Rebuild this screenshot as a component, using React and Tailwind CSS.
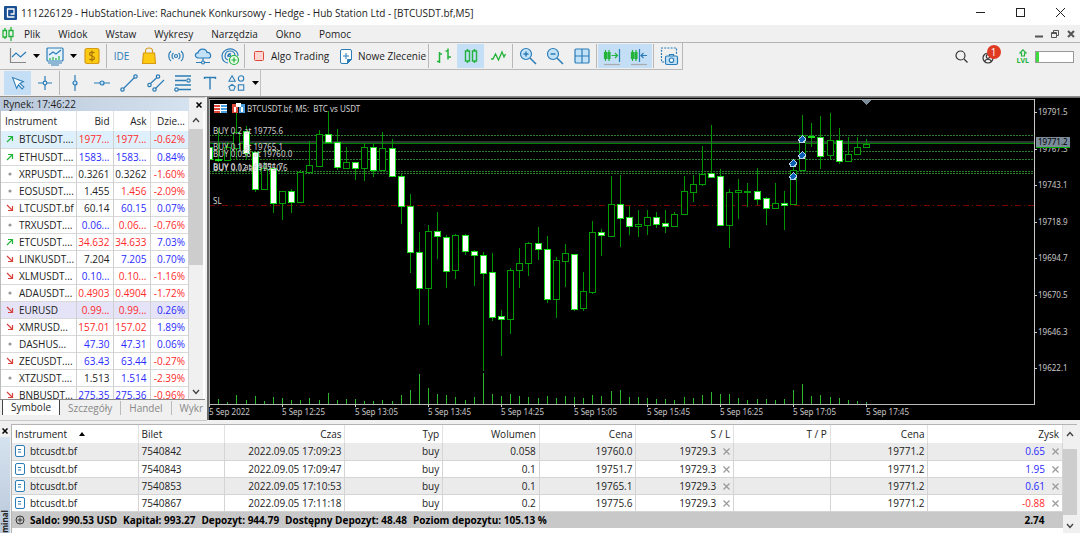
import { useState } from 'react'
import clsx from 'clsx'

const BLUE = '#2b7db8'
const GREEN = '#22b33a'

const MENU = ['Plik', 'Widok', 'Wstaw', 'Wykresy', 'Narzędzia', 'Okno', 'Pomoc']

const RED_TXT = 'text-[#ff2a2a]'
const BLUE_TXT = 'text-[#2a2aff]'
const DARK_TXT = 'text-[#222]'
const TONE = { r: RED_TXT, b: BLUE_TXT, k: DARK_TXT }

// dir, symbol, bid, ask, daily change, tones of the three numbers
const QUOTES = [
  ['up', 'BTCUSDT....', '1977...', '1977...', '-0.62%', 'rrr'],
  ['up', 'ETHUSDT....', '1583...', '1583...', '0.84%', 'bbb'],
  ['flat', 'XRPUSDT....', '0.3261', '0.3262', '-1.60%', 'kkr'],
  ['flat', 'EOSUSDT....', '1.455', '1.456', '-2.09%', 'krr'],
  ['down', 'LTCUSDT.bf', '60.14', '60.15', '0.07%', 'kbb'],
  ['flat', 'TRXUSDT....', '0.06...', '0.06...', '-0.76%', 'brr'],
  ['up', 'ETCUSDT....', '34.632', '34.633', '7.03%', 'rrb'],
  ['down', 'LINKUSDT...', '7.204', '7.205', '0.70%', 'kbb'],
  ['down', 'XLMUSDT...', '0.10...', '0.10...', '-1.16%', 'brr'],
  ['flat', 'ADAUSDT...', '0.4903', '0.4904', '-1.72%', 'rrr'],
  ['down', 'EURUSD', '0.99...', '0.99...', '0.26%', 'rrb'],
  ['down', 'XMRUSD...', '157.01', '157.02', '1.89%', 'rrb'],
  ['flat', 'DASHUS...', '47.30', '47.31', '0.06%', 'bbb'],
  ['down', 'ZECUSDT....', '63.43', '63.44', '-0.27%', 'bbr'],
  ['flat', 'XTZUSDT....', '1.513', '1.514', '-2.39%', 'kbr'],
  ['down', 'BNBUSDT...', '275.35', '275.36', '-0.96%', 'bbr'],
]

const POSITIONS = [
  ['7540842', '2022.09.05 17:09:23', '0.058', '19760.0', '0.65'],
  ['7540843', '2022.09.05 17:09:47', '0.1', '19751.7', '1.95'],
  ['7540853', '2022.09.05 17:10:53', '0.1', '19765.1', '0.61'],
  ['7540867', '2022.09.05 17:11:18', '0.2', '19775.6', '-0.88'],
]

// body top, body bottom, high, low, falling, volume
const CANDLES = [
  [147, 159, 147, 159, 1, 0], [159, 160, 128, 162, 1, 5], [147, 160, 142, 160, 0, 2],
  [132, 148, 113, 159, 0, 9], [131, 153, 126, 159, 1, 4], [152, 189, 152, 192, 1, 8],
  [168, 189, 162, 189, 0, 3], [168, 203, 168, 213, 1, 7], [191, 203, 191, 220, 0, 6],
  [191, 202, 189, 213, 1, 4], [172, 202, 170, 203, 0, 4], [165, 172, 141, 172, 0, 6],
  [134, 166, 130, 167, 0, 4], [134, 142, 111, 144, 1, 11], [142, 167, 129, 170, 1, 4],
  [162, 168, 147, 168, 0, 5], [162, 168, 162, 180, 1, 5], [147, 168, 143, 181, 0, 3],
  [147, 170, 144, 177, 1, 3], [148, 170, 132, 171, 0, 4], [148, 176, 139, 177, 1, 3],
  [176, 206, 174, 224, 1, 9], [206, 252, 194, 273, 1, 14], [252, 288, 232, 325, 1, 30],
  [231, 288, 225, 325, 0, 16], [231, 236, 212, 259, 1, 10], [237, 271, 235, 288, 1, 9],
  [235, 270, 234, 279, 0, 7], [235, 251, 234, 255, 1, 4], [251, 255, 250, 286, 1, 7],
  [255, 273, 252, 371, 1, 31], [272, 317, 253, 321, 1, 10], [316, 319, 310, 356, 1, 8],
  [270, 319, 268, 334, 0, 10], [263, 270, 248, 288, 0, 8], [243, 263, 242, 276, 0, 7],
  [243, 249, 227, 260, 1, 6], [249, 299, 236, 303, 1, 8], [260, 299, 257, 318, 0, 6],
  [253, 261, 244, 287, 0, 8], [254, 309, 254, 311, 1, 7], [291, 308, 272, 311, 0, 6],
  [232, 292, 221, 294, 0, 9], [232, 235, 229, 256, 1, 8], [204, 236, 176, 236, 0, 13],
  [204, 218, 175, 247, 1, 14], [217, 226, 206, 235, 1, 7], [224, 226, 210, 237, 0, 7],
  [217, 225, 210, 235, 0, 6], [217, 224, 212, 228, 1, 5], [223, 226, 210, 233, 1, 5],
  [214, 226, 212, 227, 0, 4], [191, 214, 176, 215, 0, 7], [184, 192, 175, 202, 0, 6],
  [174, 184, 146, 186, 0, 9], [173, 177, 125, 177, 1, 12], [176, 225, 169, 225, 1, 10],
  [192, 225, 189, 248, 0, 10], [190, 192, 179, 219, 0, 6], [191, 192, 183, 207, 0, 4],
  [191, 199, 168, 205, 1, 5], [198, 208, 197, 225, 1, 5], [203, 208, 183, 209, 0, 4],
  [203, 205, 191, 230, 1, 5], [170, 204, 159, 205, 0, 14], [135, 170, 115, 171, 0, 20],
  [136, 137, 123, 147, 1, 8], [137, 156, 116, 169, 1, 9], [140, 155, 113, 159, 0, 7],
  [140, 161, 128, 164, 1, 6], [154, 161, 137, 162, 0, 4], [147, 154, 137, 155, 0, 3],
  [144, 147, 139, 147, 0, 2],
]

const TIMES = ['5 Sep 2022', '5 Sep 12:25', '5 Sep 13:05', '5 Sep 13:45', '5 Sep 14:25', '5 Sep 15:05', '5 Sep 15:45', '5 Sep 16:25', '5 Sep 17:05', '5 Sep 17:45']
const PRICES = ['19791.5', '19767.3', '19743.1', '19718.9', '19694.7', '19670.5', '19646.3', '19622.1']

const TOP = 98
const STEP = 9.125
const AXIS = 306

const ENTRIES = [
  [134, 'BUY 0.2 at 19775.6'],
  [150, 'BUY 0.1 at 19765.1'],
  [157, 'BUY 0.058 at 19760.0'],
  [170, 'BUY 0.1 at 19751.7'],
  [171, 'BUY 0.02 at 19750.6'],
]

function Icon({ size = 20, children, stroke = BLUE }) {
  return (
    <svg width={size} height={size} viewBox="0 0 20 20" fill="none" stroke={stroke} strokeWidth="1.2" aria-hidden="true" className="shrink-0">
      {children}
    </svg>
  )
}

function Tool({ label, active, children }) {
  return (
    <button aria-label={label} className={clsx('flex h-6 w-[27px] shrink-0 items-center justify-center', active && 'bg-[#c3def5]')}>
      {children}
    </button>
  )
}

function Caret({ label }) {
  return (
    <button aria-label={label} className="flex h-6 w-[10px] shrink-0 items-center justify-center">
      <svg width="7" height="4" viewBox="0 0 7 4"><path d="M0 0h7L3.500 4z" fill="#000" /></svg>
    </button>
  )
}

const Sep = () => <div className="mx-px h-6 w-px shrink-0 bg-[#b8b8b8]" />

function TitleBar() {
  return (
    <header className="flex h-[25px] items-center bg-white pl-1">
      <svg width="13" height="14" viewBox="0 0 13 14" className="shrink-0">
        <rect width="13" height="14" rx="1" fill="#1b4f93" />
        <path d="M3.500 11.500V3h6.500v5H6.500M3.500 11h7" fill="none" stroke="#fff" strokeWidth="1.300" />
      </svg>
      <h1 className="ml-1 flex-1 truncate text-[10px] leading-4">111226129 - HubStation-Live: Rachunek Konkursowy - Hedge - Hub Station Ltd - [BTCUSDT.bf,M5]</h1>
      <button aria-label="Minimize" className="flex w-10 justify-center">
        <svg width="9" height="9" stroke="#222"><path d="M0 4.500h9" /></svg>
      </button>
      <button aria-label="Maximize" className="flex w-10 justify-center">
        <svg width="9" height="9" stroke="#222" fill="none"><rect x=".5" y=".5" width="8" height="8" /></svg>
      </button>
      <button aria-label="Close" className="flex w-10 justify-center">
        <svg width="9" height="9" stroke="#222"><path d="M0 0l9 9M9 0L0 9" /></svg>
      </button>
    </header>
  )
}

function MenuBar() {
  return (
    <nav className="flex h-[18px] items-center border-b border-[#b4b4b4] pr-[5px]">
      <svg width="12" height="14" viewBox="0 0 12 14" fill="none" stroke={GREEN} strokeWidth="1.300" className="ml-[2px] shrink-0">
        <path d="M3 1v2M3 10v2M9 0v3M9 10v4M1 3.500h3.500v6.500H1zM7 3.500h4v6H7z" />
      </svg>
      <div className="ml-[10px] flex flex-1 gap-[18px] text-[10px] leading-4">
        {MENU.map((m) => <button key={m}>{m}</button>)}
      </div>
      <div className="flex gap-2 text-[#555]">
        <button aria-label="Minimize chart"><svg width="8" height="8" stroke="currentColor" strokeWidth="2"><path d="M0 6.500h8" /></svg></button>
        <button aria-label="Restore chart"><svg width="8" height="8" stroke="currentColor" fill="none"><path d="M.5 2.500h5v5h-5zM2.500 2V.5h5v5H6M1 3.500h4" /></svg></button>
        <button aria-label="Close chart"><svg width="8" height="8" stroke="currentColor" strokeWidth="2"><path d="M1 1l6 6M7 1L1 7" /></svg></button>
      </div>
    </nav>
  )
}

function StandardBar() {
  return (
    <div className="flex h-[27px] items-center">
      <div className="flex h-[27px] items-center border-r border-b border-[#b8b8b8] pl-1">
        <Tool label="Chart type">
          <Icon><path d="M2.500 2v14.500H18" stroke="#888" /><path d="M4 11l4-4 4.500 4L18 6" /></Icon>
        </Tool>
        <Caret label="Chart type menu" />
        <Tool label="Template">
          <Icon>
            <rect x="2" y="2" width="16" height="13" rx="1" fill="#e5f2fb" />
            <path d="M4 9l4-3 3 2 5-4" /><path d="M5 14v-2M8 14v-3M11 14v-2M14 14v-4" stroke={GREEN} />
            <path d="M3 17h14M6 19h8" />
          </Icon>
        </Tool>
        <Caret label="Template menu" />
        <Tool label="Trading account">
          <Icon>
            <rect x="3" y="2.500" width="14" height="15" rx="2" fill="#fcc913" stroke="#d79a12" />
            <path d="M12.500 7c-1-1.300-5-1.300-5 1s5 1.600 5 4-4 2.200-5 .8M10 4.500v11" stroke="#a87408" />
          </Icon>
        </Tool>
        <Sep />
        <Tool label="IDE"><span className="text-[10px] leading-4 text-[#2b7db8]">IDE</span></Tool>
        <Tool label="Market">
          <Icon stroke="#d79a12"><path d="M6.500 8V5c0-4 7-4 7 0v3" /><path d="M4.500 7h11l1 10.500h-13z" fill="#fcc913" /></Icon>
        </Tool>
        <Tool label="Signals">
          <Icon><circle cx="10" cy="10" r="1.500" /><path d="M7.500 7c-2 1.500-2 4.500 0 6M12.500 7c2 1.500 2 4.500 0 6M5 5c-3 2.500-3 7.500 0 10M15 5c3 2.500 3 7.500 0 10" /></Icon>
        </Tool>
        <Tool label="VPS">
          <Icon><path d="M5 12c-4-1-3-5.500 0-5C6 2 13 2 14 6.500c4-.5 5 5.500 1.500 5.500z" fill="#c3e2f8" /><path d="M10 12v3M3 16.500h5.500M11.500 16.500H17" /><circle cx="10" cy="16.500" r="1.500" /></Icon>
        </Tool>
        <Tool label="Broadcast">
          <Icon>
            <path d="M8 17C1 16 0 7 6 4s12 1 12 6M8 14c-5-2-3-9 2-9 3 0 5 2 5 5M8 11c-1-2 1-4 3-3" />
            <circle cx="9.500" cy="9.500" r="1" />
            <circle cx="14" cy="14" r="4.500" fill="#e9fbe9" stroke={GREEN} /><path d="M14 11.500v5M11.500 14h5" stroke={GREEN} />
          </Icon>
        </Tool>
        <Sep />
        <button className="flex h-6 w-[87px] shrink-0 items-center gap-[7px] pl-2 text-[10px] leading-4 whitespace-nowrap">
          <svg width="10" height="10" className="shrink-0"><rect x=".5" y=".5" width="9" height="9" rx="1" fill="#ffd6cf" stroke="#e0483a" /></svg>
          Algo Trading
        </button>
        <button className="flex h-6 w-[94px] shrink-0 items-center gap-[6px] pl-[7px] text-[10px] leading-4 whitespace-nowrap">
          <svg width="12" height="15" viewBox="0 0 12 15" fill="#fff" stroke={BLUE} className="shrink-0">
            <path d="M2 .5h8q1.500 0 1.500 1.500v8l-4 4.500H2q-1.500 0-1.500-1.500V2Q.5.5 2 .5z" /><path d="M6 4v6M3 7h6" /><path d="M7.500 14.500v-4h4z" fill={BLUE} />
          </svg>
          Nowe Zlecenie
        </button>
        <Sep />
        <Tool label="Bar chart"><Icon stroke={GREEN}><path d="M5.500 6v11M5.500 8h2.500M3 15.500h2.500M14 2.500v11M11.500 5H14M14 11h3" strokeWidth="1.500" /></Icon></Tool>
        <Tool label="Candlesticks" active><Icon stroke={GREEN}><path d="M6.500 3v2M6.500 15v2M13.500 3v2M13.500 15v2M4.500 5h4v10h-4zM11.500 5h4v10h-4z" strokeWidth="1.400" /></Icon></Tool>
        <Tool label="Line chart"><Icon stroke={GREEN}><path d="M3 13h2l2.500-5 3 6 3.500-8 2 5 1.500-3" strokeWidth="1.300" /></Icon></Tool>
        <Sep />
        <Tool label="Zoom in"><Icon><circle cx="8" cy="8" r="5.500" fill="#c3e2f8" /><path d="M12 12l6 6M8 5.500v5M5.500 8h5" strokeWidth="1.500" /></Icon></Tool>
        <Tool label="Zoom out"><Icon><circle cx="8" cy="8" r="5.500" fill="#c3e2f8" /><path d="M12 12l6 6M5.500 8h5" strokeWidth="1.500" /></Icon></Tool>
        <Tool label="Tile windows"><Icon><rect x="3" y="3" width="14" height="14" rx="1" fill="#c3e2f8" /><path d="M10 3v14M3 10h14" /></Icon></Tool>
        <Sep />
        <Tool label="Auto scroll" active>
          <Icon><path d="M3.500 4v11M7 4v11M2.500 6.500h2v6h-2zM6 6.500h2v6H6zM9.500 9.500H15M13 7l2.500 2.500L13 12" stroke={GREEN} /><path d="M17.500 3v13" /><path d="M2 18.500h16" stroke="#aaa" /></Icon>
        </Tool>
        <Tool label="Chart shift" active>
          <Icon><path d="M3.500 4v11M7 4v11M2.500 6.500h2v6h-2zM6 6.500h2v6H6z" stroke={GREEN} /><path d="M10.500 3v13M12 9.500h6M14.500 7L12 9.500l2.500 2.500" /><path d="M2 18.500h16" stroke="#aaa" /></Icon>
        </Tool>
        <Sep />
        <Tool label="Screenshot">
          <Icon><path d="M5 16H2.500V2h15v6" strokeDasharray="2 1.200" /><rect x="6.500" y="10" width="12" height="8.500" rx="1.500" fill="#c3e2f8" /><path d="M10.500 10V8.500h4V10" /><circle cx="12.500" cy="14.200" r="2.200" fill="#fff" /></Icon>
        </Tool>
      </div>
      <div className="ml-auto flex items-center pr-[6px]">
        <button aria-label="Search" className="mr-[13px]">
          <svg width="13" height="13" fill="none" stroke="#333" strokeWidth="1.200"><circle cx="5.500" cy="5.500" r="4.500" /><path d="M9 9l3.500 3.500" /></svg>
        </button>
        <button aria-label="Account" className="relative mr-4">
          <svg width="20" height="16" fill="none" stroke="#333" strokeWidth="1.200"><circle cx="7" cy="9" r="5" /><circle cx="7" cy="7.500" r="1.800" /><path d="M3.500 12.500c1-3 6-3 7 0" /></svg>
          <span className="absolute -top-1 right-0 flex size-[14px] items-center justify-center rounded-full bg-[#e03a22] text-[10px] leading-none text-white">1</span>
        </button>
        <div className="mr-[6px] flex flex-col items-center text-[#22b33a]">
          <svg width="8" height="8" fill="none" stroke="currentColor" strokeWidth="1.200"><path d="M4 .8L7.200 4H5.500v3h-3V4H.8z" /></svg>
          <span className="text-[7px] leading-[7px] font-bold">LVL</span>
        </div>
        <div role="meter" aria-label="Connection level" aria-valuenow={6} className="h-[12px] w-[39px] border border-[#999] bg-white">
          <div className="h-full w-[3px] bg-[#3fdc3f]" />
        </div>
      </div>
    </div>
  )
}

function DrawingBar() {
  return (
    <div className="flex h-[27px] items-center border-b border-[#8e8e8e]">
      <div className="flex h-[26px] items-center border-r border-[#c0c0c0] pl-1">
        <Tool label="Cursor" active><Icon size={18}><path d="M4 4l4.500 12 2-4 4 4.500 2-2-4.500-4 4-2z" fill="#fff" /></Icon></Tool>
        <Tool label="Crosshair"><Icon><path d="M10 3v5M10 12v5M3 10h5M12 10h5" /><circle cx="10" cy="10" r="1.800" /></Icon></Tool>
        <Sep />
        <Tool label="Vertical line"><Icon><path d="M10 2v6M10 12v6" /><circle cx="10" cy="10" r="2" fill="#c3e2f8" /></Icon></Tool>
        <Tool label="Horizontal line"><Icon><path d="M2 10h6M12 10h6" /><circle cx="10" cy="10" r="2" fill="#c3e2f8" /></Icon></Tool>
        <Tool label="Trend line"><Icon><path d="M5 15L15.500 4.500" /><circle cx="3.500" cy="16.500" r="1.700" /><circle cx="16.500" cy="3.500" r="1.700" /></Icon></Tool>
        <Tool label="Channel"><Icon><path d="M4.500 10.500L11 4.500M9.500 15.500L18 7" /><circle cx="3.500" cy="12" r="1.700" /><circle cx="12" cy="3.500" r="1.700" /><circle cx="8.500" cy="16.500" r="1.700" /></Icon></Tool>
        <Tool label="Fibonacci"><Icon><path d="M2 3h16M2 7.500h11M2 12h16M5 16.500h13" strokeWidth="1.400" /><circle cx="15.500" cy="7.500" r="1.700" /><circle cx="3.500" cy="16.500" r="1.700" /></Icon></Tool>
        <Tool label="Text"><Icon><path d="M4.500 6V4.500h11V6M10 4.500v12" strokeWidth="1.400" /></Icon></Tool>
        <Tool label="Shapes"><Icon size={18}><path d="M4.500 2L8 8H1z" /><circle cx="14.500" cy="5" r="3" /><path d="M4.500 11.500l3.500 2.700-1.500 3.800h-4L1 14.200z" /><rect x="11.500" y="12" width="6" height="6" /></Icon></Tool>
        <Caret label="Shapes menu" />
      </div>
    </div>
  )
}

function Direction({ dir }) {
  if (dir === 'flat') return <svg width="8" height="8"><circle cx="4" cy="4" r="1.600" fill="#999" /></svg>
  return dir === 'up'
    ? <svg width="8" height="8" fill="none" stroke={GREEN} strokeWidth="1.200"><path d="M1 7l5.500-5.500M2 1.500h4.500V6" /></svg>
    : <svg width="8" height="8" fill="none" stroke="#d9403a" strokeWidth="1.200"><path d="M1 1l5.500 5.500M2 6.500h4.500V2" /></svg>
}

function ScrollBar({ thumb }) {
  return (
    <div className="flex w-[14px] shrink-0 flex-col items-center bg-[#f0f0f0]">
      <svg width="8" height="18" fill="none" stroke="#444" strokeWidth="1.400" className="shrink-0"><path d="M1 11l3-3.500L7 11" /></svg>
      <div className={clsx('w-full bg-[#cdcdcd]', thumb)} />
      <svg width="8" height="14" fill="none" stroke="#444" strokeWidth="1.400" className="mt-auto shrink-0"><path d="M1 5l3 3.500L7 5" /></svg>
    </div>
  )
}

function MarketWatch() {
  const [tab, setTab] = useState('Symbole')
  return (
    <section className="flex w-[205px] shrink-0 flex-col">
      <div className="flex h-[14px] items-center justify-between border-t border-[#c8c8c8] bg-[#f0f0f0] pr-[3px]">
        <h2 className="h-[13px] w-[189px] bg-linear-to-r from-[#b9c8da] to-[#d5e2ef] pl-[3px] text-[10px] leading-[13px]">Rynek: 17:46:22</h2>
        <button aria-label="Close market watch"><svg width="6" height="6" stroke="#000" strokeWidth="1.500"><path d="M.5.5l5 5M5.500.5l-5 5" /></svg></button>
      </div>
      <div className="flex h-[288px] overflow-hidden border-l border-[#bbb] bg-white">
        <table className="h-fit w-[188px] table-fixed border-collapse text-[10px] leading-4">
          <thead>
            <tr className="h-5 *:border-r *:border-[#e2e2e2] *:pr-[3px] *:text-right *:font-normal">
              <th className="w-[75px] pl-1 !text-left">Instrument</th>
              <th className="w-[37px]">Bid</th>
              <th className="w-[37px]">Ask</th>
              <th>Dzie...</th>
            </tr>
          </thead>
          <tbody>
            {QUOTES.map(([dir, symbol, bid, ask, change, tones], i) => (
              <tr key={symbol} className={clsx('h-[17px] border-b border-[#d9d9d9] whitespace-nowrap *:border-r *:border-[#d0d0d0] *:p-0', i === 0 && 'bg-[#dff0fd]', symbol === 'EURUSD' && 'bg-[#e4e3f8]')}>
                <td>
                  <div className="flex items-center gap-[5px] pl-[5px]"><span className="shrink-0"><Direction dir={dir} /></span>{symbol}</div>
                </td>
                {[bid, ask, change].map((v, j) => (
                  <td key={j} className={clsx('text-right', TONE[tones[j]])}><div className="pr-[3px]">{v}</div></td>
                ))}
              </tr>
            ))}
          </tbody>
        </table>
        <ScrollBar thumb="h-[136px]" />
      </div>
      <div role="tablist" className="flex h-4 items-center overflow-hidden border-t border-[#888] text-[10px] leading-[14px] whitespace-nowrap">
        {['Symbole', 'Szczegóły', 'Handel', 'Wykr'].map((t) => (
          <button
            key={t}
            role="tab"
            aria-selected={t === tab}
            onClick={() => setTab(t)}
            className={clsx('shrink-0 px-2', t === tab ? 'ml-[2px] h-4 border-r border-b border-l border-[#444] bg-white' : 'text-[#888] not-last:border-r not-last:border-[#bbb]')}
          >
            {t}
          </button>
        ))}
      </div>
    </section>
  )
}

function Candle({ i, data }) {
  const [top, bottom, high, low, falling, volume] = data
  const x = Math.round(i * STEP)
  const h = Math.max(bottom - top, 1)
  return (
    <g>
      <rect x={x} y={high - TOP} width="1" height={low - high} fill="#009400" />
      <rect x={x - 2.5} y={top - TOP + 0.5} width="6" height={h} fill={falling ? '#fff' : '#000'} stroke={falling ? '#18e018' : '#009c00'} />
      <rect x={x} y={AXIS - volume} width="1" height={volume} fill="#2db52d" />
    </g>
  )
}

function Marker({ x, y }) {
  return (
    <g transform={`translate(${x} ${y})`}>
      <path d="M0-4L4 0 3 3.500h-6L-4 0z" fill="#b9d4ec" />
      <path d="M0-3L3 0 1.500 2.500h-3L-3 0z" fill="#0b5fb5" />
    </g>
  )
}

function Chart() {
  return (
    <section className="flex h-[323px] min-w-0 flex-1 overflow-hidden border-t border-l-2 border-[#6b6b6b] bg-black font-['Noto_Sans',sans-serif] text-[8px]">
      <svg className="h-full min-w-0 flex-1" shapeRendering="crispEdges" aria-label="BTCUSDT.bf, M5">
        {[135, 151, 159, 171, 173].map((y) => (
          <line key={y} x1="0" x2="100%" y1={y - TOP + 0.5} y2={y - TOP + 0.5} stroke="#2b7d2b" strokeDasharray="2 1" />
        ))}
        <line x1="0" x2="100%" y1="107.5" y2="107.5" stroke="#7a0000" strokeDasharray="6 3 1 3" />
        <line x1="0" x2="100%" y1={44} y2={44} stroke="#2c3434" strokeWidth="2" />
        <line x1="0" x2="100%" y1={45.5} y2={45.5} stroke="#008000" />
        {CANDLES.map((c, i) => <Candle key={i} i={i} data={c} />)}
        <Marker x={584} y={65} />
        <Marker x={584} y={78} />
        <Marker x={593} y={41} />
        <Marker x={593} y={57} />
        <path d="M653 2h9l-4.500 5z" fill="#7b8c9a" />

        <g>
          <rect x="5" y="6" width="13" height="9" fill="#fff" />
          <path d="M5 7.500h6M5 10.500h6M5 13.500h6" stroke="#e0483a" strokeWidth="2" />
          <path d="M12 7.500h6M12 10.500h6M12 13.500h6" stroke="#4b9fe0" strokeWidth="2" />
          <rect x="23" y="6" width="6" height="9" fill="#e0483a" />
          <rect x="25" y="9" width="2" height="5" fill="#fff" />
          <rect x="30" y="6" width="6" height="9" fill="#4b9fe0" />
          <rect x="32" y="9" width="2" height="5" fill="#fff" />
          <path d="M27 5h5v4h-5z" fill="#fff" />
        </g>
        <g fill="#d0d0d0">
          <text x="38" y="14" xmlSpace="preserve" className="whitespace-pre">BTCUSDT.bf, M5:  BTC vs USDT</text>
          {ENTRIES.map(([y, t]) => <text key={t} x="4" y={y - TOP}>{t}</text>)}
          <text x="4" y="106">SL</text>
        </g>

        <line x1="0" x2="100%" y1="1.5" y2="1.5" stroke="#aaa" />
        <line x1=".5" x2=".5" y1="1" y2={AXIS} stroke="#aaa" />
        <line x1="0" x2="100%" y1={AXIS + 0.5} y2={AXIS + 0.5} stroke="#b8b8b8" />
        {TIMES.map((t, i) => (
          <g key={t} fill="#c8c8c8">
            <rect x={i * 73} y={AXIS} width="1" height="3" />
            <text x={i * 73} y={AXIS + 11}>{t}</text>
          </g>
        ))}
      </svg>
      <svg className="h-full w-[46px] shrink-0" shapeRendering="crispEdges" fill="#c8c8c8">
        <rect x="0" y="1" width="1" height={AXIS} />
        {PRICES.map((p, i) => (
          <g key={p}>
            <rect x="1" y={Math.round(14 + i * 36.6)} width="2" height="1" />
            <text x="4" y={Math.round(17 + i * 36.6)}>{p}</text>
          </g>
        ))}
        <rect x="2" y="39" width="34" height="10" fill="#7b8c9a" />
        <rect x="2" y="49" width="34" height="1" fill="#00b000" />
        <text x="4" y="47" fill="#000">19771.2</text>
      </svg>
    </section>
  )
}

const Cross = ({ label }) => (
  <button aria-label={label} className="ml-[7px]">
    <svg width="7" height="7" stroke="#999" strokeWidth="1.200"><path d="M.5.5l6 6M6.500.5l-6 6" /></svg>
  </button>
)

function Terminal() {
  return (
    <section className="flex flex-1 overflow-hidden">
      <div className="flex w-[10px] shrink-0 flex-col items-center">
        <button aria-label="Close terminal" className="flex h-[13px] items-center"><svg width="6" height="6" stroke="#000" strokeWidth="1.500"><path d="M.5.5l5 5M5.500.5l-5 5" /></svg></button>
        <div className="flex w-full flex-1 items-end bg-linear-to-b from-[#d5e2ef] to-[#b9c8da]">
          <span className="rotate-180 text-[8px] leading-[10px] font-bold [writing-mode:vertical-rl]">minal</span>
        </div>
      </div>
      <div className="ml-px flex min-w-0 flex-1 border-t border-l border-[#b4b4b4] bg-white">
        <table className="h-fit min-w-0 flex-1 table-fixed border-collapse text-[10px] leading-4">
          <colgroup>
            <col className="w-[12%]" /><col className="w-[8.200%]" /><col className="w-[11.500%]" /><col className="w-[9.300%]" /><col className="w-[9.200%]" />
            <col className="w-[9.200%]" /><col className="w-[9.300%]" /><col className="w-[9.200%]" /><col className="w-[9.300%]" /><col />
          </colgroup>
          <thead>
            <tr className="h-[18px] *:border-r *:border-[#e2e2e2] *:px-[3px] *:py-0 *:text-right *:font-normal">
              <th className="!text-left">
                Instrument
                <svg width="6" height="4" className="mb-[2px] ml-3 inline-block"><path d="M0 4h6L3 0z" /></svg>
              </th>
              <th className="!text-left">Bilet</th>
              <th>Czas</th><th>Typ</th><th>Wolumen</th><th>Cena</th><th>S / L</th><th>T / P</th><th>Cena</th><th>Zysk</th>
            </tr>
          </thead>
          <tbody>
            {POSITIONS.map(([ticket, time, volume, price, profit], i) => (
              <tr key={ticket} className={clsx('h-[17px] border-b border-[#d4d4d4] *:border-r *:border-[#d4d4d4] *:px-[3px] *:py-0 *:text-right', i % 2 === 0 && 'bg-[#ebebeb]')}>
                <td>
                  <div className="flex items-center gap-[5px]">
                    <svg width="10" height="12" fill="#fff" stroke={BLUE} className="shrink-0"><rect x=".5" y=".5" width="9" height="11" rx="1.500" /><path d="M3 4.500h3M3 7h3" /></svg>
                    btcusdt.bf
                  </div>
                </td>
                <td className="!text-left">{ticket}</td>
                <td>{time}</td>
                <td>buy</td>
                <td>{volume}</td>
                <td>{price}</td>
                <td>19729.3<Cross label="Remove stop loss" /></td>
                <td />
                <td>19771.2</td>
                <td className={profit.startsWith('-') ? RED_TXT : BLUE_TXT}>{profit}<Cross label="Close position" /></td>
              </tr>
            ))}
          </tbody>
          <tfoot>
            <tr className="h-[17px] bg-[#c8c8c8] font-bold whitespace-nowrap text-black">
              <td colSpan={9} className="px-[3px] py-0">
                <div className="flex items-center gap-[5px]">
                  <svg width="10" height="10" fill="none" stroke="#333" className="shrink-0"><circle cx="5" cy="5" r="4" /><path d="M5 2.500v5M2.500 5h5" /></svg>
                  <span className="flex gap-[6px]">
                    <span>Saldo: 990.53 USD</span><span>Kapitał: 993.27</span><span>Depozyt: 944.79</span>
                    <span>Dostępny Depozyt: 48.48</span><span>Poziom depozytu: 105.13 %</span>
                  </span>
                </div>
              </td>
              <td className="py-0 pr-[18px] text-right">2.74</td>
            </tr>
          </tfoot>
        </table>
        <ScrollBar thumb="h-[66px] mt-[6px]" />
      </div>
      <div className="w-[3px] shrink-0" />
    </section>
  )
}

export default function App() {
  return (
    <div className="flex min-h-screen flex-col bg-[#f0f0f0] font-['Open_Sans','Noto_Sans',sans-serif] text-[#222]">
      <TitleBar />
      <MenuBar />
      <StandardBar />
      <DrawingBar />
      <main className="flex gap-[2px]">
        <MarketWatch />
        <Chart />
      </main>
      <div className="mb-[3px] h-px w-[207px] bg-[#c8c8c8]" />
      <Terminal />
    </div>
  )
}
